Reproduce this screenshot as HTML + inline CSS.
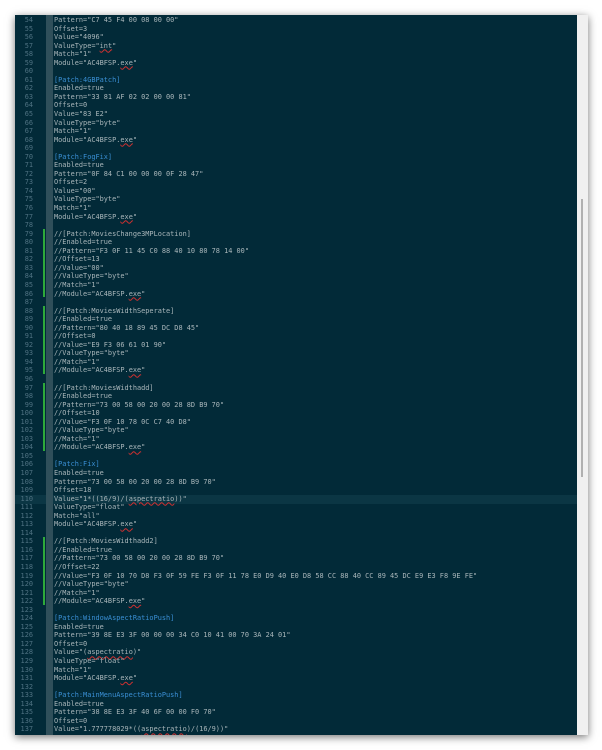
<!DOCTYPE html>
<html><head><style>
body{margin:0;width:602px;height:750px;background:#fff;overflow:hidden;position:relative;font-family:"Liberation Mono",monospace}
#ed{position:absolute;left:15px;top:15px;width:573px;height:720px;background:#022a38;box-shadow:0 2px 8px rgba(0,0,0,.55);overflow:hidden}
#sb{position:absolute;left:562px;top:0;width:11px;height:720px;background:#f0f0f0}
#th{position:absolute;left:566px;top:184px;width:2px;height:278px;background:#b0b0b0}
#gut{position:absolute;left:31px;top:0;width:7px;height:720px;background:#2f4f5a}
#cur{position:absolute;left:0;top:480px;width:562px;height:8.55px;background:#0b3644}
pre{margin:0;position:absolute;top:1px;font-size:6.9px;line-height:8.554px;color:#a9b6ba}
#num{left:0;width:18px;text-align:right;color:#4f7282}
#code{left:39px}
.h{color:#3a8fd4}
.g{position:absolute;left:28px;width:2px;background:#2eaa3a}
u{text-decoration:underline wavy #d03030;text-decoration-thickness:1px}
</style></head><body>
<div id="ed">
<div id="cur"></div>
<div id="gut"></div>
<div class="g" style="top:214px;height:68px"></div>
<div class="g" style="top:291px;height:68px"></div>
<div class="g" style="top:368px;height:68px"></div>
<div class="g" style="top:522px;height:68px"></div>
<pre id="num">54
55
56
57
58
59
60
61
62
63
64
65
66
67
68
69
70
71
72
73
74
75
76
77
78
79
80
81
82
83
84
85
86
87
88
89
90
91
92
93
94
95
96
97
98
99
100
101
102
103
104
105
106
107
108
109
110
111
112
113
114
115
116
117
118
119
120
121
122
123
124
125
126
127
128
129
130
131
132
133
134
135
136
137</pre>
<pre id="code">Pattern="C7 45 F4 00 08 00 00"
Offset=3
Value="4096"
ValueType="<u>int</u>"
Match="1"
Module="AC4BFSP.<u>exe</u>"

<span class="h">[Patch:4GBPatch]</span>
Enabled=true
Pattern="33 81 AF 02 02 00 00 81"
Offset=0
Value="83 E2"
ValueType="byte"
Match="1"
Module="AC4BFSP.<u>exe</u>"

<span class="h">[Patch:FogFix]</span>
Enabled=true
Pattern="0F 84 C1 00 00 00 0F 28 47"
Offset=2
Value="00"
ValueType="byte"
Match="1"
Module="AC4BFSP.<u>exe</u>"

//[Patch:MoviesChange3MPLocation]
//Enabled=true
//Pattern="F3 0F 11 45 C0 88 40 10 80 78 14 00"
//Offset=13
//Value="00"
//ValueType="byte"
//Match="1"
//Module="AC4BFSP.<u>exe</u>"

//[Patch:MoviesWidthSeperate]
//Enabled=true
//Pattern="80 40 18 89 45 DC D8 45"
//Offset=0
//Value="E9 F3 06 61 01 90"
//ValueType="byte"
//Match="1"
//Module="AC4BFSP.<u>exe</u>"

//[Patch:MoviesWidthadd]
//Enabled=true
//Pattern="73 00 58 00 20 00 28 8D B9 70"
//Offset=10
//Value="F3 0F 10 78 0C C7 40 D8"
//ValueType="byte"
//Match="1"
//Module="AC4BFSP.<u>exe</u>"

<span class="h">[Patch:Fix]</span>
Enabled=true
Pattern="73 00 58 00 20 00 28 8D B9 70"
Offset=18
Value="1*((16/9)/(<u>aspectratio</u>))"
ValueType="float"
Match="all"
Module="AC4BFSP.<u>exe</u>"

//[Patch:MoviesWidthadd2]
//Enabled=true
//Pattern="73 00 58 00 20 00 28 8D B9 70"
//Offset=22
//Value="F3 0F 10 70 D8 F3 0F 59 FE F3 0F 11 78 E0 D9 40 E0 D8 58 CC 88 40 CC 89 45 DC E9 E3 F8 9E FE"
//ValueType="byte"
//Match="1"
//Module="AC4BFSP.<u>exe</u>"

<span class="h">[Patch:WindowAspectRatioPush]</span>
Enabled=true
Pattern="39 8E E3 3F 00 00 00 34 C0 10 41 00 70 3A 24 01"
Offset=0
Value="(<u>aspectratio</u>)"
ValueType="float"
Match="1"
Module="AC4BFSP.<u>exe</u>"

<span class="h">[Patch:MainMenuAspectRatioPush]</span>
Enabled=true
Pattern="38 8E E3 3F 40 6F 00 00 F0 70"
Offset=0
Value="1.777778029*((<u>aspectratio</u>)/(16/9))"</pre>
<div id="sb"></div><div id="th"></div>
</div>
</body></html>
